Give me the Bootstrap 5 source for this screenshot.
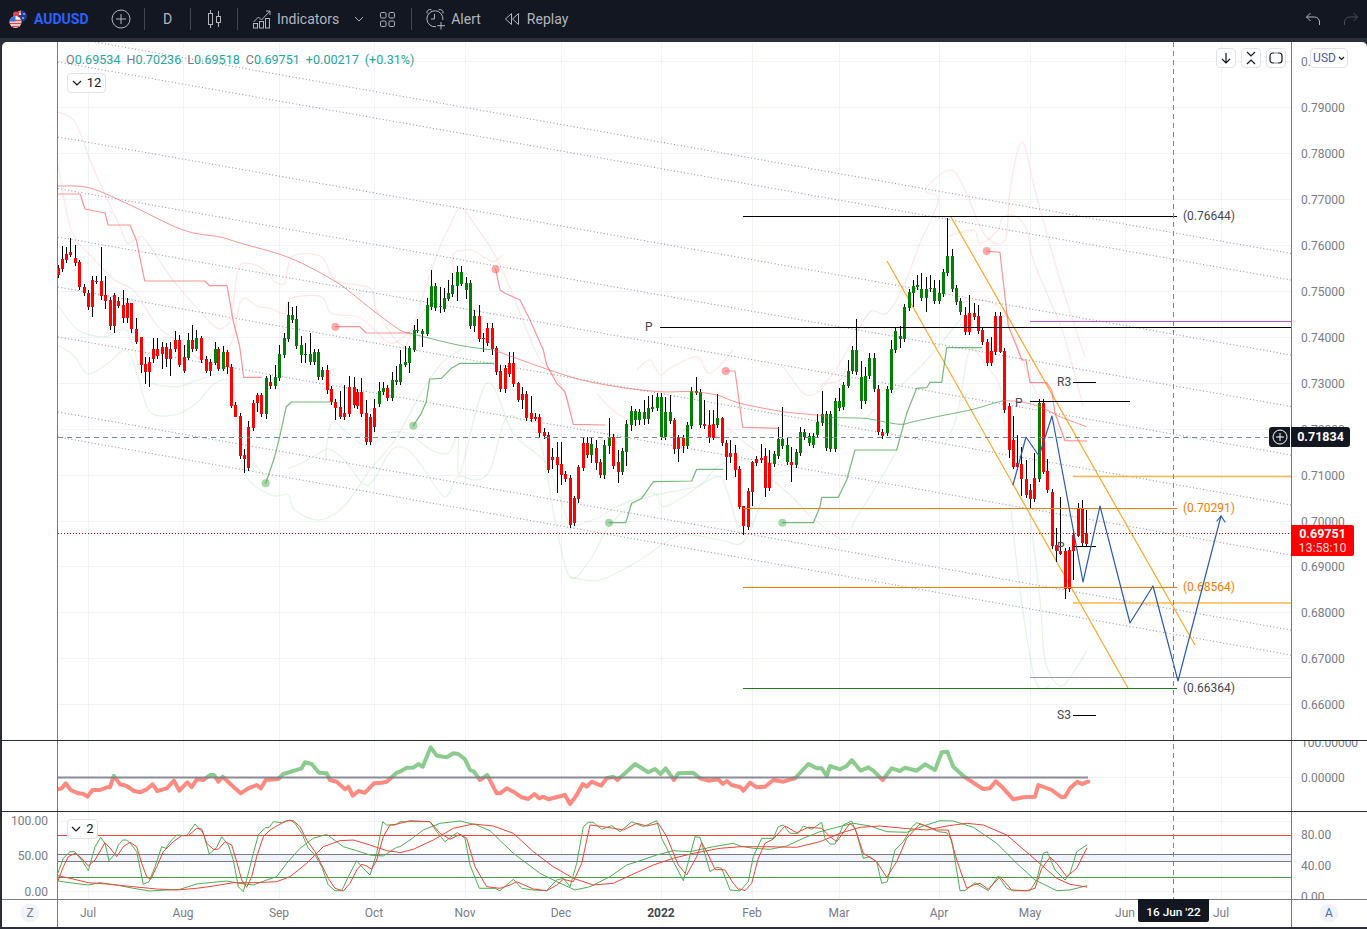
<!DOCTYPE html>
<html lang="en">
<head>
<meta charset="UTF-8">
<meta name="viewport" content="width=device-width, initial-scale=1">
<title>AUDUSD</title>
<link href="https://cdn.jsdelivr.net/npm/bootstrap@5.3.2/dist/css/bootstrap.min.css" rel="stylesheet">
<style>
html, body { height: 929px; overflow: hidden; }
body { background: #2a2e39; font-family: Roboto, "Liberation Sans", sans-serif; }
.tb-bar { height: 38px; background: #131722; color: #b2b5be; font-size: 14px; flex-wrap: nowrap; justify-content: flex-start; }
.tb-bar svg { display: block; fill: none; stroke: #b2b5be; stroke-width: 1; }
.tb-sym { width: 104px; padding-left: 9px; gap: 7px; color: #2962ff; font-weight: 700; }
.tb-sym svg { stroke: none; }
.tb-plus { width: 34px; }
.tb-sep { width: 1px; height: 22px; background: #434651; }
.tb-sep-a { margin-left: 6px; }
.tb-sep-b { margin-left: 15px; }
.tb-d { width: 45px; }
.tb-candle { width: 46px; }
.tb-ind { padding-left: 14px; gap: 5px; }
.tb-chev { margin-left: 14px; }
.tb-grid { margin-left: 14px; }
.tb-alert { margin-left: 13px; gap: 5px; }
.tb-replay { margin-left: 23px; gap: 7px; }
.tb-undo { margin-left: auto; }
.tb-redo { margin-left: 22px; margin-right: 8px; opacity: .35; }
.chart-frame { position: absolute; left: 2px; top: 42px; width: 1365px; height: 885px; background: #fff; border-radius: 5px 5px 0 0; overflow: hidden; }
.chart-frame > svg { display: block; }
.ohlc { position: absolute; left: 64px; top: 10px; font-size: 12.6px; line-height: 16px; color: #787b86; white-space: nowrap; }
.ohlc span { color: #26a69a; margin-right: 6px; }
.ohlc span.chg { margin-right: 0; }
.mini-btn { position: absolute; display: flex; align-items: center; justify-content: center; padding: 0; background: #fff; border: 1px solid #e0e3eb; border-radius: 4px; color: #131722; font-size: 13px; gap: 5px; height: 20px; }
.mini-btn svg { display: block; fill: none; stroke: #131722; stroke-width: 1.2; }
.btn-legend { left: 65px; top: 31px; width: 39px; }
.btn-stoch { left: 65px; top: 777px; width: 31px; height: 20px; }
.btn-down { left: 1214px; top: 6px; width: 20px; }
.btn-fold { left: 1239px; top: 6px; width: 20px; }
.btn-full { left: 1264px; top: 6px; width: 20px; }
.btn-usd { left: 1308px; top: 6px; width: 38px; font-size: 12px; gap: 2px; color: #4a5a9a; }
.price-tag { position: absolute; left: 1289px; color: #fff; font-weight: 700; text-align: center; font-size: 12.5px; line-height: 14px; }
.tag-cross { top: 385px; width: 59px; height: 20px; line-height: 20px; background: #131722; border-radius: 0 3px 3px 0; }
.tag-last { top: 483px; width: 63px; height: 31px; padding-top: 2px; background: #f00; border-radius: 0 2px 2px 0; }
.tag-last div { font-weight: 400; color: #ffd9d9; }
.tag-plus { position: absolute; left: 1267px; top: 385px; width: 21px; height: 20px; background: #131722; border-radius: 3px 0 0 3px; display: flex; align-items: center; justify-content: center; }
.tag-plus svg { display: block; fill: none; stroke: #fff; }
.tag-date { position: absolute; left: 1136px; top: 857px; width: 71px; height: 23px; padding-top: 3px; line-height: 20px; background: #131722; border-radius: 0 0 2px 2px; color: #fff; font-size: 11.8px; font-weight: 500; text-align: center; }
</style>
</head>
<body class="m-0">
<nav class="navbar tb-bar p-0 d-flex align-items-center">
  <div class="tb-sym d-flex align-items-center">
    <svg width="18" height="20" viewBox="0 0 18 20">
      <defs>
        <clipPath id="au"><circle cx="12.5" cy="7" r="5.5"/></clipPath>
        <clipPath id="us"><circle cx="6.5" cy="13" r="6"/></clipPath>
      </defs>
      <g clip-path="url(#au)">
        <rect x="6" y="1" width="13" height="12" fill="#1f3f8f"/>
        <path d="M7 1h5v5H7z" fill="#e8eaf2"/>
        <path d="M7 3h5M9.5 1v5" stroke="#d8343f"/>
        <circle cx="15" cy="5" r=".8" fill="#fff"/><circle cx="14" cy="9" r=".8" fill="#fff"/>
      </g>
      <circle cx="7" cy="5.5" r="3" fill="#e0434f"/>
      <g clip-path="url(#us)">
        <rect x="0" y="7" width="13" height="12" fill="#f4f4f6"/>
        <path d="M0 11.5h13M0 14.5h13M0 17.5h13" stroke="#e0434f" stroke-width="1.4"/>
        <path d="M0 7h6.5v5.5H0z" fill="#3f6fd8"/>
      </g>
    </svg>
    <span>AUDUSD</span>
  </div>
  <div class="tb-plus d-flex justify-content-center">
    <svg width="20" height="20" viewBox="0 0 20 20"><circle cx="10" cy="10" r="9"/><path d="M10 5v10M5 10h10"/></svg>
  </div>
  <div class="tb-sep tb-sep-a"></div>
  <div class="tb-d text-center">D</div>
  <div class="tb-sep"></div>
  <div class="tb-candle d-flex justify-content-center">
    <svg width="16" height="20" viewBox="0 0 16 20"><path d="M4.5 1v18M12.5 2v16"/><rect x="2.5" y="4.5" width="4" height="11" fill="#131722"/><rect x="10.5" y="7.5" width="4" height="6" fill="#131722"/></svg>
  </div>
  <div class="tb-sep"></div>
  <div class="tb-ind d-flex align-items-center">
    <svg width="20" height="20" viewBox="0 0 20 20"><path d="M1.5 13l5-5 3 3L18 2M14 2h4v4"/><rect x="1.5" y="14.5" width="4" height="4.5"/><rect x="7.5" y="12.5" width="4" height="6.5"/><rect x="13.5" y="9.5" width="4" height="9.5"/></svg>
    <span>Indicators</span>
  </div>
  <div class="tb-chev"><svg width="12" height="8" viewBox="0 0 12 8"><path d="M2 2l4 4 4-4"/></svg></div>
  <div class="tb-grid"><svg width="17" height="17" viewBox="0 0 17 17"><rect x="1.5" y="1.5" width="5.5" height="5.5" rx="1.2"/><rect x="10" y="1.5" width="5.5" height="5.5" rx="1.2"/><rect x="1.5" y="10" width="5.5" height="5.5" rx="1.2"/><rect x="10" y="10" width="5.5" height="5.5" rx="1.2"/></svg></div>
  <div class="tb-sep tb-sep-b"></div>
  <div class="tb-alert d-flex align-items-center">
    <svg width="21" height="22" viewBox="0 0 21 22"><path d="M11 18.7A8 8 0 1 1 17.8 12M2 5.5A3.2 3.2 0 0 1 6.5 1.8M18 5.5A3.2 3.2 0 0 0 13.5 1.8M9.5 6v5H6M16 14v7.5M12.3 17.7H20"/></svg>
    <span>Alert</span>
  </div>
  <div class="tb-replay d-flex align-items-center">
    <svg width="16" height="14" viewBox="0 0 16 14"><path d="M7.5 1.5L1.5 7l6 5.5zM14.5 1.5L8.5 7l6 5.5z"/></svg>
    <span>Replay</span>
  </div>
  <div class="tb-undo"><svg width="16" height="14" viewBox="0 0 16 14"><path d="M1.5 5h8a5 5 0 0 1 5 5v3M5.5 1l-4 4 4 4"/></svg></div>
  <div class="tb-redo"><svg width="16" height="14" viewBox="0 0 16 14"><path d="M14.5 5h-8a5 5 0 0 0-5 5v3M10.5 1l4 4-4 4"/></svg></div>
</nav>

<div class="chart-frame">
  <svg id="chart" width="1365" height="885" viewBox="2 42 1365 885"></svg>

  <div class="ohlc">O<span>0.69534</span>H<span>0.70236</span>L<span>0.69518</span>C<span>0.69751</span><span>+0.00217</span><span class="chg">(+0.31%)</span></div>
  <button class="mini-btn btn-legend" type="button"><svg width="10" height="7" viewBox="0 0 10 7"><path d="M1 1l4 4 4-4"/></svg>12</button>
  <button class="mini-btn btn-stoch" type="button"><svg width="10" height="7" viewBox="0 0 10 7"><path d="M1 1l4 4 4-4"/></svg>2</button>
  <button class="mini-btn btn-down" type="button"><svg width="12" height="12" viewBox="0 0 12 12"><path d="M6 1v10M2 7l4 4 4-4"/></svg></button>
  <button class="mini-btn btn-fold" type="button"><svg width="12" height="14" viewBox="0 0 12 14"><path d="M2 1l4 4 4-4M2 13l4-4 4 4"/></svg></button>
  <button class="mini-btn btn-full" type="button"><svg width="14" height="12" viewBox="0 0 14 12"><path d="M4 1h6a3 3 0 0 1 3 3v4a3 3 0 0 1-3 3H4a3 3 0 0 1-3-3V4a3 3 0 0 1 3-3z"/><path d="M5 1h4M5 11h4" stroke="#fff"/></svg></button>
  <button class="mini-btn btn-usd" type="button">USD<svg width="7" height="5" viewBox="0 0 7 5"><path d="M1 1l2.5 2.5L6 1"/></svg></button>

  <div class="tag-plus"><svg width="16" height="16" viewBox="0 0 16 16"><circle cx="8" cy="8" r="7"/><path d="M8 4v8M4 8h8"/></svg></div>
  <div class="price-tag tag-cross">0.71834</div>
  <div class="price-tag tag-last">0.69751<div>13:58:10</div></div>
  <div class="tag-date">16 Jun '22</div>
</div>

<script>
// reads "x,y x,y" taken from 3x crops, returns page coordinates
function z(x0, y0, s) {
  return s.trim().split(/\s+/).map(p => {
    const a = p.split(",").map(Number);
    return [x0 + a[0] / 3, y0 + a[1] / 3];
  });
}
const pstr = pts => pts.map(p => p[0].toFixed(1) + "," + p[1].toFixed(1)).join(" ");
let out = "";
function line(x1, y1, x2, y2, col, w, extra) {
  out += `<line x1="${x1}" y1="${y1}" x2="${x2}" y2="${y2}" stroke="${col}" stroke-width="${w || 1}" ${extra || ""}/>`;
}
function poly(pts, col, w, extra) {
  out += `<polyline points="${pstr(pts)}" fill="none" stroke="${col}" stroke-width="${w || 1}" stroke-linejoin="round" stroke-linecap="round" ${extra || ""}/>`;
}
// catmull-rom through the points, for the curved envelopes
function smooth(pts, col, w) {
  let d = `M${pts[0][0].toFixed(1)} ${pts[0][1].toFixed(1)}`;
  for (let i = 0; i < pts.length - 1; i++) {
    const p0 = pts[i - 1] || pts[i], p1 = pts[i], p2 = pts[i + 1], p3 = pts[i + 2] || p2;
    const c1x = p1[0] + (p2[0] - p0[0]) / 6, c1y = p1[1] + (p2[1] - p0[1]) / 6;
    const c2x = p2[0] - (p3[0] - p1[0]) / 6, c2y = p2[1] - (p3[1] - p1[1]) / 6;
    d += `C${c1x.toFixed(1)} ${c1y.toFixed(1)} ${c2x.toFixed(1)} ${c2y.toFixed(1)} ${p2[0].toFixed(1)} ${p2[1].toFixed(1)}`;
  }
  out += `<path d="${d}" fill="none" stroke="${col}" stroke-width="${w}"/>`;
}
function label(x, y, txt, col, anchor, extra) {
  out += `<text x="${x}" y="${y}" fill="${col}" font-size="12" text-anchor="${anchor || "start"}" dominant-baseline="central" ${extra || ""}>${txt}</text>`;
}
const GRID = "#f0f3fa", GRAY = "#787b86";

out += `<defs>
<clipPath id="cMain"><rect x="58" y="42" width="1233" height="698"/></clipPath>
<clipPath id="cRsi"><rect x="58" y="741" width="1233" height="70"/></clipPath>
<clipPath id="cStoch"><rect x="58" y="812" width="1233" height="87"/></clipPath>
<clipPath id="cAbove"><rect x="58" y="741" width="1233" height="37"/></clipPath>
<clipPath id="cBelow"><rect x="58" y="778" width="1233" height="33"/></clipPath>
<clipPath id="cAxis2"><rect x="1292" y="741" width="75" height="70"/></clipPath>
<clipPath id="cAxis3"><rect x="1292" y="812" width="75" height="87"/></clipPath>
</defs>`;

// grid
const months = [88, 183, 279, 374, 465, 561, 661, 752, 839, 939, 1030, 1125, 1221];
months.forEach(x => line(x + .5, 42, x + .5, 898, GRID));
const prices = [];
for (let i = 0; i < 15; i++) prices.push(61 + i * 45.95);
prices.forEach(y => line(58, Math.round(y) + .5, 1291, Math.round(y) + .5, GRID));
[777.5, 821.5, 891.5].forEach(y => line(58, y, 1291, y, GRID));

out += '<g clip-path="url(#cMain)">';

// channel lines, all the same slope
[35.5, 62, 137, 188.5, 237, 287, 337, 412, 437].forEach(y0 => {
  line(58, y0, 1291, y0 + 218, "#9598a1", 1.1, 'stroke-dasharray="1 2.4"');
});

// faint envelopes
const PINK = "rgba(255,82,82,.14)", PALE = "rgba(76,175,80,.14)";
[
  [[58,112],[75,122],[92,165],[110,205]].concat(z(58,230,"190,0 210,40 245,20 270,40 330,130 400,215 470,290 500,290 520,260 540,120 570,100 620,120 650,155 680,160 690,110 710,75 790,80 830,150 900,165 940,180 960,250 1030,345 1060,310 1100,180 1150,40 1170,0")).concat([[460,208],[475,225],[500,265]]).concat(z(450,350,"255,0 290,50 330,100 370,195")),
  [[58,165]].concat(z(58,230,"40,0 110,90 170,150 230,185 300,290 370,340 450,400 520,340 550,210 600,230 640,235 680,250 700,205 790,200 820,250 900,260 950,300 1000,340 1060,300 1100,240 1150,200 1200,190")).concat(z(450,250,"7,20 60,0 100,20 130,35 160,15")),
  z(450,350,"440,130 500,190 600,240 640,260 700,240 780,190 830,230 900,290 960,320"),
  z(450,350,"1000,50 1060,130 1100,130 1130,100 1170,90 1200,30"),
  z(450,350,"560,60 600,30 630,75 660,55 740,20 780,70 850,0"),
  z(820,200,"0,560 40,520 100,420 150,335 200,340 250,260 300,130 355,0").concat([[925,190],[950,170],[965,190],[985,235],[1005,240],[1010,190],[1022,142],[1035,190],[1060,280],[1085,357]]),
  z(820,200,"380,110 460,90 480,130 530,95 550,50 590,50 620,90 640,180 685,290 730,400 790,620"),
  z(820,200,"420,310 470,300 520,310 560,350 600,460 640,560 680,620 720,700 760,730")
].forEach(p => smooth(p, PINK, 1.2));
[
  z(58,230,"0,225 60,300 140,320 205,300 240,400 270,455 360,470 420,450 510,435 540,555 560,730 640,795 690,795 710,840").concat([[320,520],[345,505],[370,470],[395,440],[420,395],[440,365],[460,350],[475,340],[495,350]]),
  z(58,230,"0,345 50,380 90,432 150,400 205,360 240,440 275,545 350,555 415,520 470,460 520,460 540,600 590,700 640,760"),
  z(58,230,"800,700 820,580 870,610 930,650 990,610 1050,610 1120,660 1170,670 1200,620").concat(z(450,350,"30,370 110,100 190,250 270,320 300,360 360,530 370,530 450,500 500,470 610,430 640,470 700,440 800,380 830,420 870,560")),
  z(58,230,"690,715 730,700 800,660 820,660 860,690 930,765 1000,660 1050,660 1100,720 1160,800 1200,740").concat([[475,480],[490,470],[505,420],[520,420],[540,440],[555,520],[570,577],[590,560],[610,525],[640,500],[680,490],[700,485],[720,465],[745,460],[760,470],[790,495],[815,520],[845,540],[855,520],[880,480],[897,450]]),
  [[570,577],[600,580],[640,560],[680,535],[720,540],[745,540],[770,480],[790,470]],
  z(820,200,"130,660 250,550 330,470 420,360 440,350"),
  z(820,200,"370,740 410,650 440,480 460,445 480,470 510,510 540,560 560,700 590,730").concat([[1025,480],[1040,600],[1045,660],[1060,686],[1075,670],[1087,650]]),
  [[1010,500],[1020,590],[1035,680],[1050,686]]
].forEach(p => smooth(p, PALE, 1.2));

// orange channel
line(951, 217, 1195, 645, "#ffa726", 1.2);
line(887, 261, 1128, 688, "#ffa726", 1.2);

// candles, "x top bottom wickTop wickBottom colour"
function parseCandles(x0, y0, s) {
  return s.trim().split(";").map(r => {
    const a = r.trim().split(/\s+/);
    const t = +a[1], b = +a[2];
    const wt = a[3] === "-" ? t - 9 : +a[3];
    const wb = a[4] === "-" ? b + 8 : +a[4];
    return { x: x0 + a[0] / 3, t: y0 + t / 3, b: y0 + b / 3, wt: y0 + wt / 3, wb: y0 + wb / 3, c: a[5] };
  });
}
const candles = [].concat(
  parseCandles(58, 230, `0 115 135 - - r;13 88 117 48 - r;25 72 90 50 - r;37 66 74 25 - r;51 84 98 45 108 r;64 97 172 90 - r;77 172 190 - - r;90 190 230 - 240 r;103 150 232 138 260 r;115 153 155 138 - r;129 152 197 50 210 r;142 196 212 138 237 r;155 210 288 - 300 r;168 195 288 190 308 r;181 213 227 200 - r;195 225 263 180 280 r;208 218 263 205 280 r;220 218 298 218 308 r;235 297 335 265 - r;248 322 405 320 428 r;260 403 426 380 462 r;274 397 426 380 472 r;286 358 387 325 400 r;298 358 378 325 - r;313 352 372 335 416 r;325 352 387 340 410 r;337 357 387 335 437 r;352 330 358 303 - r;364 330 404 315 - r;377 381 422 345 - r;391 330 383 310 - g;403 330 358 285 - r;415 325 356 300 - g;430 324 390 318 - r;443 388 422 - - r;455 396 423 - 437 r;470 357 398 335 - g;481 357 416 350 - r;494 366 416 347 - g;508 366 412 360 432 r;520 410 527 - - r;532 525 560 - 540 r;547 558 678 - - r;559 675 687 657 728 r;571 591 714 573 - r;586 518 594 - - r;598 495 520 490 547 r;610 495 552 490 - r;625 444 552 437 567 g;637 456 468 435 - r;650 441 468 405 477 g;664 372 444 345 - g;677 324 375 310 - g;689 255 327 217 - g;703 255 270 230 - g;715 267 348 228 356 g;730 345 375 318 398 g;742 371 374 340 398 g;755 372 396 310 - g;769 366 396 357 - g;781 366 441 - - g;793 420 441 - - g;808 420 480 405 493 r;820 477 516 - - r;832 516 534 - 570 r;847 531 561 483 567 r;859 549 561 465 570 r;872 471 552 438 - r;887 471 525 440 - r;898 486 528 - - r;910 486 552 444 - r;925 549 636 510 - r;937 561 637 - - r;949 534 592 507 607 r;964 484 522 457 - g;976 474 486 457 - g;988 474 504 - - r;1003 450 504 425 - g;1015 450 456 408 - g;1027 402 456 360 - g;1042 396 404 347 - g;1054 354 399 348 428 g;1067 300 359 285 - g;1078 299 302 267 - g;1093 303 311 296 350 g;1106 225 311 205 - g;1120 168 231 120 - g;1132 168 234 - - g;1145 229 232 170 248 g;1159 204 237 175 - g;1171 190 206 150 - g;1183 165 192 130 - g;1197 125 165 108 210 g`),
  parseCandles(450, 250, `22 66 108 48 152 g;34 66 101 48 - g;49 99 120 80 148 g;61 99 228 - - g;73 198 228 180 247 g;88 198 267 165 - r;100 264 267 248 305 r;112 234 279 220 - r;127 234 297 218 315 r`),
  parseCandles(450, 350, `139 -6 66 -12 - r;151 63 117 45 - r;165 55 117 45 130 r;178 40 72 5 - r;190 40 102 5 110 r;205 99 150 95 155 r;217 132 150 110 178 r;229 132 204 - - r;243 188 207 138 - r;255 200 206 190 - r;268 201 249 - 260 r;283 246 258 235 268 r;295 255 360 - - r;307 321 330 295 357 r;322 321 345 277 430 r;334 342 375 277 405 r;346 372 387 - - r;361 384 525 - - r;373 444 519 438 - r;385 351 447 345 460 r;400 279 354 262 - r;412 279 315 260 - r;424 282 315 260 339 g;439 294 339 270 360 r;451 336 375 - - r;463 285 375 270 387 g;478 264 288 205 312 g;490 261 348 - - r;503 336 366 300 398 r;517 303 366 - - g;529 222 306 210 348 g;544 183 225 168 243 g;556 183 210 178 228 g;568 186 210 178 225 g;583 186 207 150 225 g;595 174 207 138 222 g;607 171 177 135 - g;622 141 174 130 - g;634 141 261 130 - g;646 186 261 140 - g;661 186 213 135 - g;673 210 297 205 312 r;685 261 297 255 336 r;700 264 288 - 309 r;712 225 288 - - g;724 123 228 110 237 g;739 123 129 82 135 g;751 126 225 - - g;763 222 228 150 - r;778 225 264 180 279 r;790 222 264 180 270 r;802 204 225 132 - g;817 204 279 200 - r;829 279 321 - 390 r;841 309 321 270 340 r;856 309 360 285 380 r;868 357 471 - 478 r;880 468 528 468 556 r;895 423 531 - - r;907 336 426 333 468 r;919 327 339 - - r;934 324 330 282 - r;946 318 414 293 441 r;958 339 414 300 423 r;973 312 342 - - g;985 267 318 230 - g;997 267 288 171 - g;1012 285 336 260 - g;1024 336 345 290 396 r;1039 306 345 - - g;1051 246 309 232 - g;1063 246 261 - - g;1078 258 279 - - g;1090 258 285 - - g;1102 216 255 192 - g;1117 192 219 123 - g;1129 192 294 - - g;1141 192 297 - - g;1156 153 297 - - g;1168 153 174 115 - g;1180 105 171 95 - g;1195 63 107 30 - g`),
  parseCandles(820, 200, `97 450 513 438 - g;109 450 516 357 - g;124 531 603 484 627 g;136 528 603 500 - g;148 474 528 460 - g;163 474 567 460 - g;175 567 696 555 - r;187 696 708 - - r;202 567 699 - - g;214 447 570 420 - g;226 393 450 - - g;241 408 417 378 445 g;253 321 417 - - g;267 276 324 - - g;280 258 279 240 320 g;292 255 262 225 - g;304 268 294 220 - g;319 267 294 230 335 g;331 264 268 225 - g;343 264 303 240 - g;358 279 303 240 - g;370 216 282 - - g;382 168 219 55 - g;397 168 267 148 - g;409 264 306 - - g;421 303 336 - - g;436 345 396 322 - r;448 339 396 285 - r;463 339 351 310 - r;475 348 393 315 - r;487 390 426 - - r;502 426 490 - - r;514 453 490 410 - r;526 348 456 335 - r;541 348 456 335 460 r`),
  parseCandles(1000, 380, `13 -87 90 -95 100 r;26 78 210 - 235 r;40 180 260 108 - r;52 250 262 165 - r;64 252 296 200 348 r;79 296 345 240 - r;91 330 358 312 383 r;103 295 358 220 - r;118 68 297 58 - g;130 68 275 58 - r;142 272 330 238 340 r;157 336 498 - - r;169 496 513 445 545 r;181 513 522 350 525 r;196 513 627 - 658 r;208 510 627 - - r;220 465 513 450 600 r;235 387 468 368 470 r;247 387 490 360 - r;259 460 492 390 - r`)
);
out += '<g shape-rendering="crispEdges">';
candles.forEach(c => {
  const x = Math.round(c.x);
  out += `<rect x="${x}" y="${c.wt.toFixed(1)}" width="1" height="${(c.wb - c.wt).toFixed(1)}" fill="#000"/>`;
  out += `<rect x="${x - 1}" y="${c.t.toFixed(1)}" width="3" height="${Math.max(c.b - c.t, 1).toFixed(1)}" fill="${c.c === "r" ? "#f00" : "#008000"}"/>`;
});
out += "</g>";

// moving average, red when above price and green under
const MR = "rgba(250,90,90,.65)", MG = "rgba(50,150,60,.68)";
smooth([[58,186],[90,188],[130,205],[183,230],[220,237],[240,243],[290,258],[333,280],[350,292],[375,312],[400,330],[410,333]], MR, 1);
smooth([[409,333],[458,345],[493,350]], MG, 1);
smooth(z(450,350,"130,0 360,80 500,110 630,125 720,125 800,135 870,160 1000,185 1100,195 1130,200"), MR, 1);
smooth(z(820,200,"20,652 50,653 130,655 165,660 240,673 280,665 350,650 450,630 520,610 550,602"), MG, 1);
smooth(z(820,200,"550,602 600,605 660,620 720,650 800,680"), MR, 1);

// stepped stop line, one piece per trend
const stepRed = [
  [[58,194],[80,194],[85,209],[105,213],[108,225],[130,225]].concat(z(58,230,"222,0 235,30 260,153 440,153 455,167 507,167 525,270 545,350 557,442 610,442")),
  z(58,230,"832,290 905,290 925,309 1053,309"),
  z(450,250,"137,58 150,120 165,130").concat([[520,300],[530,320]]).concat(z(450,350,"280,0 290,45 320,100 345,125 370,223 465,225")),
  z(450,350,"827,63 855,63 878,232 985,235"),
  z(820,200,"500,153 540,157 555,290 565,378 590,440 605,480 618,480 630,548 680,548 695,570 705,640 735,722 800,723")
];
const stepGreen = [
  z(58,230,"623,760 650,680 665,620 685,530 700,516 825,516"),
  z(58,230,"1066,587 1090,550 1105,515 1115,447 1150,445 1180,415").concat(z(450,350,"30,40 130,40")),
  z(450,350,"477,518 527,518 545,460 575,445 610,395 725,393 740,358 818,358"),
  z(450,350,"997,518 1090,518 1110,470 1115,442 1165,442 1190,390").concat([[855,450]]).concat(z(820,200,"230,750 260,640 290,565 320,563 330,547 365,547 380,443 485,443"))
];
stepRed.forEach((p, i) => {
  poly(p, MR, 1.2);
  if (i) out += `<circle cx="${p[0][0]}" cy="${p[0][1]}" r="4" fill="#ff5252" opacity=".5"/>`;
});
stepGreen.forEach(p => {
  poly(p, MG, 1.2);
  out += `<circle cx="${p[0][0]}" cy="${p[0][1]}" r="4" fill="#4caf50" opacity=".5"/>`;
});

// drawn levels
const ORANGE = "#f57c00";
line(743, 216.5, 1177, 216.5, "#000");
line(660, 327.5, 1291, 327.5, "#000");
line(1030, 321.5, 1291, 321.5, "#c050e0");
line(743, 508.5, 1177, 508.5, ORANGE);
line(743, 587.5, 1177, 587.5, ORANGE);
line(743, 688.5, 1177, 688.5, "#1b7a1b");
line(1030, 677.5, 1291, 677.5, "#9a9ca5");
line(1073, 476.5, 1291, 476.5, "#ffb74d", 1.6);
line(1073, 603, 1291, 603, "#ffb74d", 1.6);
line(1030, 401.5, 1130, 401.5, "#000");
line(1073, 382.5, 1096, 382.5, "#000");
line(1073, 546.5, 1096, 546.5, "#000");
line(1073, 715.5, 1096, 715.5, "#000");
label(1183, 216, "(0.76644)", "#434651");
label(1183, 508, "(0.70291)", ORANGE);
label(1183, 587, "(0.68564)", ORANGE);
label(1183, 688, "(0.66364)", "#434651");
label(645, 327, "P", "#434651", "start", 'font-size="11"');
label(1015, 403, "P", "#434651", "start", 'font-size="11"');
label(1057, 382, "R3", "#434651", "start", 'font-size="11"');
label(1057, 547, "P", "#434651", "start", 'font-size="11"');
label(1057, 715, "S3", "#434651", "start", 'font-size="11"');

// forecast path
poly([[1013,485],[1026,437],[1039,456],[1052,416],[1083,582],[1100,506],[1130,623],[1153,586],[1178,681],[1221,516]], "#2a5caa", 1.2);
poly([[1217,521],[1221,516],[1225,522]], "#2a5caa", 1.2);

// last price and crosshair
line(58, 533.5, 1291, 533.5, "#d40000", 1, 'stroke-dasharray="1 2"');
line(58, 437.5, 1268, 437.5, "#758696", 1, 'stroke-dasharray="5 4"');
out += "</g>";

// rsi pane
const rsi = z(0,730,"174,178 185,175 197,160 212,180 235,190 250,192 263,200 277,180 300,180 320,172 330,172 341,138 360,163 380,168 400,182 420,187 440,178 458,163 472,183 500,175 522,152 538,182 562,157 575,172 590,148 610,150 630,135 642,135 655,155 668,140 700,170 722,190 745,175 770,165 783,175 797,150 835,147 850,132 905,115 915,97 935,102 957,128 980,130 990,150 1010,155 1035,178 1045,170 1058,197 1075,183 1095,188 1122,160 1145,158 1160,155 1190,128")
  .concat(z(400,740,"0,95 20,83 40,83 55,72 68,80 92,22 110,47 140,52 160,40 175,42 195,58 210,90 222,95 240,120 262,105 290,160 300,160 320,145 340,155 365,172 385,177 403,162 418,175 430,170 445,178 495,165 510,192 530,165 548,132 560,140 575,125 603,137 620,115 640,110 652,120 680,95 705,72 745,97 765,87 782,102 797,85 822,120 835,100 880,98 900,115 925,122 955,118 968,132 980,123 995,135 1015,140"))
  .concat(z(740,740,"0,140 10,152 30,128 50,142 75,140 100,120 130,125 155,117 165,115 205,72 230,85 245,85 260,108 270,78 300,88 320,78 335,60 362,92 385,82 400,92 428,120 455,85 480,93 495,83 530,92 555,73 585,90 605,37 622,35 640,80 670,108 710,135 730,147 750,145 767,124 790,145 820,178 850,172 885,170 895,135 935,150 965,172 975,170 990,145 1012,125 1025,132 1045,125"));
out += '<g clip-path="url(#cRsi)">';
poly(rsi, "#8ccb8e", 4, 'clip-path="url(#cAbove)"');
poly(rsi, "#ff8a80", 4, 'clip-path="url(#cBelow)"');
line(58, 777.5, 1088, 777.5, GRAY, 2, 'opacity=".85"');
out += "</g>";

// stochastic pane
out += '<g clip-path="url(#cStoch)">';
out += `<rect x="58" y="855" width="1233" height="6" fill="#f0f3fa"/>`;
line(58, 835.5, 1291, 835.5, "#f44336");
line(58, 854.5, 1291, 854.5, GRAY);
line(58, 861.5, 1291, 861.5, GRAY);
line(58, 877.5, 1291, 877.5, "#43a047");
const LG = "#4caf50", LR = "#f44336";
function joined(a, b, c) { return z(0,730,a).concat(z(400,740,b), z(740,740,c)); }
poly(joined(
  "174,453 210,458 265,465 300,458 350,465 400,475 450,483 500,480 540,478 590,462 640,457 680,453 720,460 760,465 800,450 830,440 860,400 900,355 940,325 980,313 1030,350 1070,362 1110,375 1150,378 1190,352",
  "0,320 30,300 70,270 120,250 180,243 230,255 270,272 340,340 420,400 470,425 525,450 570,440 630,410 680,375 720,362 770,345 820,332 870,335 940,320 1000,310",
  "0,318 40,325 90,328 140,318 190,295 240,275 290,262 340,250 390,258 440,275 500,277 550,258 600,242 640,243 700,262 770,310 830,370 885,420 950,452 990,450 1040,437"), LG);
poly(joined(
  "174,437 210,445 265,458 320,462 400,470 470,477 530,480 590,475 640,468 700,458 760,458 830,455 870,440 920,400 970,350 1020,332 1060,330 1110,345 1160,362 1190,366",
  "0,338 40,328 100,300 160,265 220,252 280,258 340,280 400,335 460,380 520,415 580,435 640,430 700,402 760,375 820,355 880,340 960,325 1010,321",
  "0,320 80,320 170,322 240,305 300,280 360,262 420,258 490,265 560,270 620,258 680,250 730,255 800,285 870,345 950,415 990,433 1040,441"), LR);
poly(joined(
  "174,428 190,385 210,365 225,365 245,390 265,422 285,350 302,322 315,340 327,392 345,372 355,345 368,330 380,330 395,345 410,365 430,463 447,455 465,410 485,350 497,355 515,330 530,315 560,317 585,282 610,310 628,372 650,352 665,320 685,345 700,390 715,470 730,485 745,430 760,370 775,315 795,293 808,292 820,275 845,278 870,270 885,280 905,310 925,355 945,375 965,410 985,465 1005,482 1025,482 1045,440 1070,392 1090,415 1110,435 1130,370 1148,275 1160,285 1185,285",
  "0,245 90,245 110,275 135,305 160,285 172,278 195,295 210,375 238,445 285,445 300,452 320,435 340,418 365,445 400,450 440,452 470,420 490,415 510,440 530,370 550,260 565,247 580,247 605,268 635,257 660,275 695,245 730,260 770,242 785,295 815,355 850,422 885,290 900,292 920,360 930,395 950,382 965,385 990,450 1015,452",
  "0,453 25,425 40,350 65,295 100,295 115,260 130,255 150,280 175,280 190,258 215,268 245,247 255,295 270,312 285,312 310,255 335,243 350,280 370,355 390,350 410,365 425,430 442,425 465,330 490,305 515,262 530,248 560,258 595,275 620,278 635,300 660,452 675,452 705,428 745,452 775,408 800,445 820,452 870,452 890,420 910,340 922,335 945,390 975,420 990,400 1010,335 1040,315"), LG);
poly(joined(
  "174,452 190,410 205,380 225,370 245,385 265,408 285,390 315,338 335,360 350,380 370,350 390,337 410,350 425,400 440,440 452,448 470,410 490,365 520,335 545,317 565,317 590,295 605,297 620,340 640,358 655,358 675,335 695,345 710,395 725,450 740,472 755,440 770,380 790,320 810,300 835,285 860,272 880,272 900,290 920,330 945,365 960,395 985,445 1005,475 1030,483 1050,460 1070,420 1085,403 1100,408 1115,418 1130,390 1150,320 1170,285 1190,283",
  "0,250 30,242 90,245 120,280 150,298 180,283 200,295 225,380 260,440 300,445 330,435 350,425 400,447 440,452 470,435 490,418 520,425 545,370 570,255 595,258 640,265 670,270 710,250 740,258 775,250 800,290 835,375 860,405 890,350 905,308 925,345 945,388 975,390 1000,430 1015,448",
  "0,447 15,452 35,430 55,355 75,310 100,297 135,258 170,278 205,262 245,265 270,290 290,305 330,250 345,265 370,340 410,365 440,412 470,365 500,295 540,252 590,270 625,270 650,360 680,445 700,435 720,430 745,448 780,410 815,450 860,452 885,445 905,385 930,352 950,370 980,410 1010,385 1040,325"), LR);
out += "</g>";

// frame
line(1173.5, 42, 1173.5, 899, "#758696", 1, 'stroke-dasharray="5 4"');
line(57.5, 42, 57.5, 927, GRAY);
line(1291.5, 42, 1291.5, 927, GRAY);
line(2, 740.5, 1367, 740.5, "#2a2e39");
line(2, 811.5, 1367, 811.5, "#2a2e39");
line(2, 899.5, 1367, 899.5, GRAY);

// price axis, the top label sits under the currency button so only its start shows
prices.forEach((y, i) => {
  const v = (0.80 - i * 0.01).toFixed(5);
  label(1301, y + 1, i ? v : "0.", GRAY);
});
out += '<g clip-path="url(#cAxis2)">';
label(1301, 743, "100.00000", GRAY);
out += "</g>";
label(1301, 778, "0.00000", GRAY);
out += '<g clip-path="url(#cAxis3)">';
label(1301, 835, "80.00", GRAY);
label(1301, 866, "40.00", GRAY);
label(1301, 897, "0.00", GRAY);
out += "</g>";
label(48, 820.5, "100.00", GRAY, "end");
label(48, 855.5, "50.00", GRAY, "end");
label(48, 891.5, "0.00", GRAY, "end");

// time axis
const names = ["Jul", "Aug", "Sep", "Oct", "Nov", "Dec", "2022", "Feb", "Mar", "Apr", "May", "Jun", "Jul"];
months.forEach((x, i) => {
  label(x, 913, names[i], names[i] === "2022" ? "#434651" : GRAY, "middle", names[i] === "2022" ? 'font-weight="700"' : "");
});
out += `<circle cx="30" cy="913" r="9.5" fill="#f0f3fa"/><circle cx="1329" cy="913" r="9.5" fill="#f0f3fa"/>`;
label(30, 913, "Z", GRAY, "middle", 'font-size="11"');
label(1329, 913, "A", "#4a6cb3", "middle", 'font-size="11"');

document.getElementById("chart").innerHTML = out;
</script>
<script src="https://cdn.jsdelivr.net/npm/bootstrap@5.3.2/dist/js/bootstrap.bundle.min.js"></script>
</body>
</html>
